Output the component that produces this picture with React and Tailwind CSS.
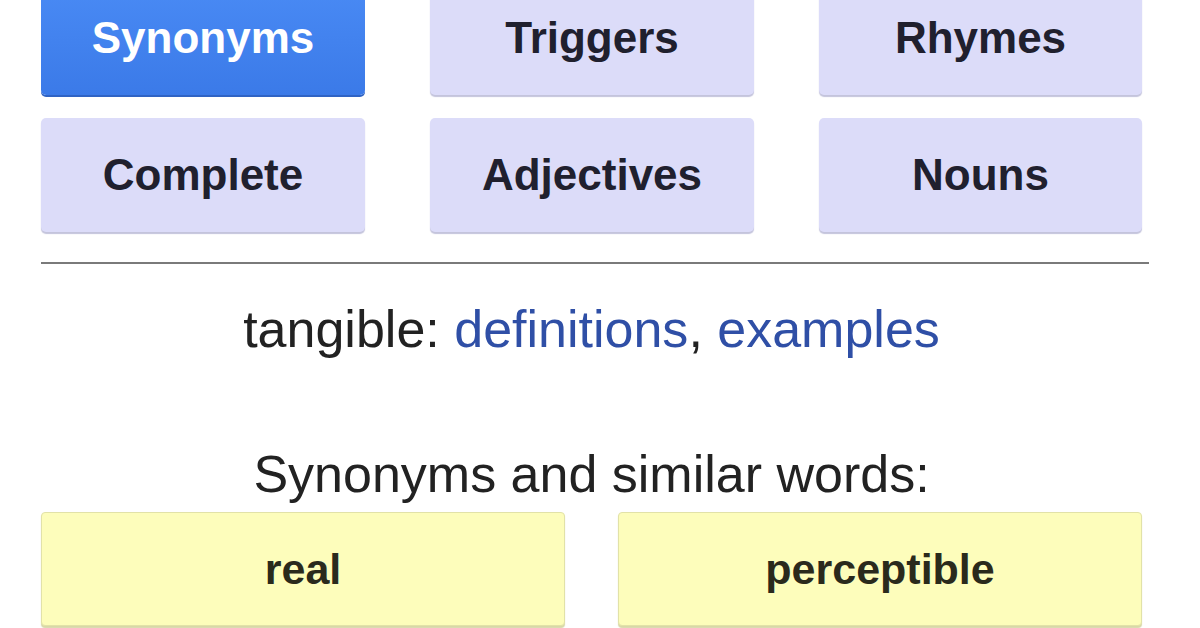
const tabs = [
  { label: "Synonyms", active: true },
  { label: "Triggers" },
  { label: "Rhymes" },
  { label: "Complete" },
  { label: "Adjectives" },
  { label: "Nouns" },
];

const results = ["real", "perceptible"];

const App = () => {
  return (
    <div
      className="w-[1200px] h-[628px] overflow-hidden bg-white text-[#222]"
      style={{ fontFamily: '"Liberation Sans", Arial, sans-serif' }}
    >
      <div className="-mt-[19px] pl-[41px] pr-[51px]">
        <div className="w-[1101px] grid grid-cols-[324px_324px_323px] justify-between gap-y-[23px]">
          {tabs.map((tab) => (
            <button
              key={tab.label}
              className={`h-[114px] rounded-[5px] text-[44px] font-bold flex items-center justify-center ${
                tab.active
                  ? "bg-gradient-to-b from-[#4a8bf5] to-[#3b7ae8] text-white shadow-[0_2px_0_#2f63c4]"
                  : "bg-[#dcdcf9] text-[#20202e] shadow-[0_2px_1px_#c4c4dc]"
              }`}
            >
              {tab.label}
            </button>
          ))}
        </div>

        <div className="mt-[30px] h-[2px] w-[1108px] bg-[#7a7a7a]" />

        <p className="mt-[35px] text-center text-[52px] leading-[60px] w-[1101px]">
          tangible:{" "}
          <a href="#" className="text-[#2f4fa6]">
            definitions
          </a>
          ,{" "}
          <a href="#" className="text-[#2f4fa6]">
            examples
          </a>
        </p>

        <p className="mt-[85px] text-center text-[52px] leading-[60px] w-[1101px]">
          Synonyms and similar words:
        </p>

        <div className="mt-[8px] w-[1101px] grid grid-cols-2 gap-x-[53px]">
          {results.map((word) => (
            <div
              key={word}
              className="h-[114px] rounded-[4px] bg-[#fdfdbb] border border-[#e2e2a8] shadow-[0_2px_1px_#d8d8a8] flex items-center justify-center text-[43px] font-bold text-[#2a2a1c]"
            >
              {word}
            </div>
          ))}
        </div>
      </div>
    </div>
  );
};

export default App;
